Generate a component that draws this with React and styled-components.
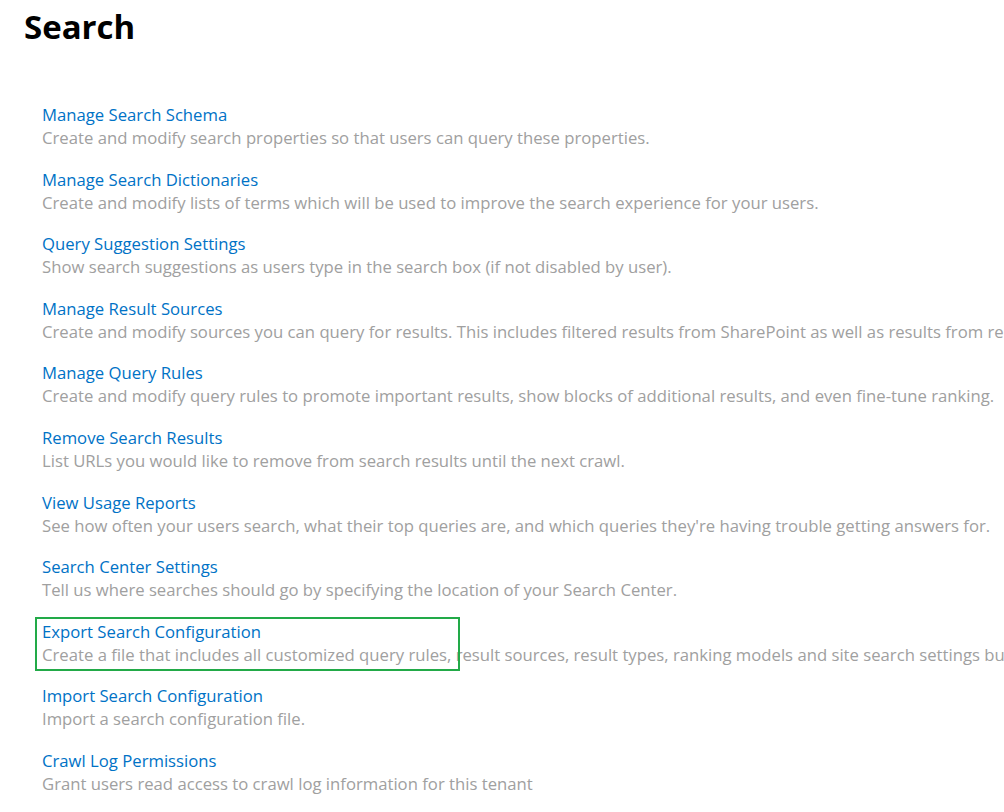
import React from 'react'
import styled, { createGlobalStyle } from 'styled-components'

const GlobalStyle = createGlobalStyle`
  html, body {
    margin: 0;
    padding: 0;
    background: #fff;
    overflow: hidden;
  }
  body {
    font-family: "Open Sans", "Noto Sans", sans-serif;
  }
`

const items = [
  { title: 'Manage Search Schema', desc: 'Create and modify search properties so that users can query these properties.' },
  { title: 'Manage Search Dictionaries', desc: 'Create and modify lists of terms which will be used to improve the search experience for your users.' },
  { title: 'Query Suggestion Settings', desc: 'Show search suggestions as users type in the search box (if not disabled by user).' },
  { title: 'Manage Result Sources', desc: 'Create and modify sources you can query for results. This includes filtered results from SharePoint as well as results from remote services.' },
  { title: 'Manage Query Rules', desc: 'Create and modify query rules to promote important results, show blocks of additional results, and even fine-tune ranking.' },
  { title: 'Remove Search Results', desc: 'List URLs you would like to remove from search results until the next crawl.' },
  { title: 'View Usage Reports', desc: "See how often your users search, what their top queries are, and which queries they're having trouble getting answers for." },
  { title: 'Search Center Settings', desc: 'Tell us where searches should go by specifying the location of your Search Center.' },
  { title: 'Export Search Configuration', desc: 'Create a file that includes all customized query rules, result sources, result types, ranking models and site search settings but not those that are shared.', highlighted: true },
  { title: 'Import Search Configuration', desc: 'Import a search configuration file.' },
  { title: 'Crawl Log Permissions', desc: 'Grant users read access to crawl log information for this tenant' },
]

const Page = styled.div`
  width: 1004px;
  height: 812px;
  overflow: hidden;
  padding: 0 0 0 24px;
  box-sizing: border-box;
`

const Title = styled.h1`
  margin: 0;
  padding-top: 4px;
  font-size: 33px;
  line-height: 46px;
  font-weight: 700;
  color: #000;
`

const List = styled.ul`
  list-style: none;
  margin: 0;
  padding: 53px 0 0 18px;
  display: flex;
  flex-direction: column;
  gap: 18.6px;
`

const Item = styled.li`
  position: relative;
  white-space: nowrap;
`

const Link = styled.a`
  display: block;
  font-size: 16.7px;
  line-height: 23px;
  color: #0072c6;
  text-decoration: none;
`

const Desc = styled.div`
  font-size: 16.7px;
  line-height: 23px;
  color: #a0a0a0;
`

const Highlight = styled.div`
  position: absolute;
  left: -7px;
  top: -3px;
  width: 421px;
  height: 50px;
  border: 2px solid #22aa48;
  pointer-events: none;
`

export default function App() {
  return (
    <>
      <GlobalStyle />
      <Page>
        <Title>Search</Title>
        <List>
          {items.map((it) => (
            <Item key={it.title}>
              <Link href="#">{it.title}</Link>
              <Desc>{it.desc}</Desc>
              {it.highlighted && <Highlight />}
            </Item>
          ))}
        </List>
      </Page>
    </>
  )
}
